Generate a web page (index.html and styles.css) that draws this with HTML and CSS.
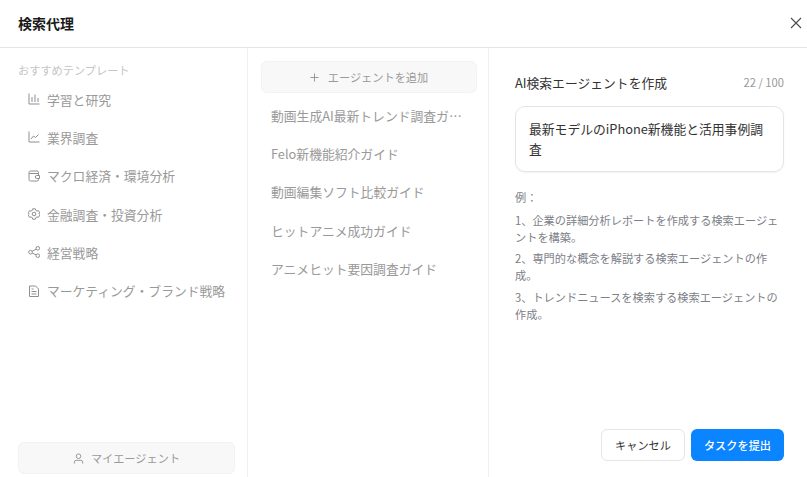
FILE: index.html
```html
<!DOCTYPE html>
<html lang="ja">
<head>
<meta charset="utf-8">
<title>検索代理</title>
<link rel="stylesheet" href="styles.css">
</head>
<body>
<div class="dialog">
  <header class="head">
    <h1 class="title">検索代理</h1>
    <button class="close" aria-label="閉じる">
      <svg width="12" height="12" viewBox="0 0 12 12"><path d="M1 1l10 10M11 1L1 11" stroke="#4b4b4b" stroke-width="1.1" fill="none"/></svg>
    </button>
  </header>
  <div class="cols">
    <aside class="left">
      <div class="label">おすすめテンプレート</div>
      <ul class="cats">
        <li class="cat"><svg class="ico" viewBox="0 0 12 12"><path d="M1 .5v10.500h10.500M4 4v5M7 1.500V9M10 5v4"/></svg>学習と研究</li>
        <li class="cat"><svg class="ico" viewBox="0 0 12 12"><path d="M1 .5v10.500h10.500M3 8l2.500-3 2 1.500L10.500 3.500"/></svg>業界調査</li>
        <li class="cat"><svg class="ico" viewBox="0 0 12 12"><path d="M10.500 3.500V2.500A1.500 1.500 0 0 0 9 1H2.500A1.500 1.500 0 0 0 1 2.500v7A1.500 1.500 0 0 0 2.500 11H9a1.500 1.500 0 0 0 1.500-1.500V8.500M1.200 3.500h9.300V5.500M11.500 5.500H8.800a1.500 1.500 0 0 0 0 3h2.700z"/></svg>マクロ経済・環境分析</li>
        <li class="cat"><svg class="ico" viewBox="0 0 12 12"><path d="M4.700.8h2.600l.4 1.500 1.300.8 1.500-.4 1.300 2.200L10.700 6l1.100 1.100-1.300 2.200-1.500-.4-1.300.8-.4 1.500H4.700l-.4-1.500-1.300-.8-1.500.4L.2 7.100 1.300 6 .2 4.900l1.300-2.200 1.500.4 1.300-.8z"/><circle cx="6" cy="6" r="1.800"/></svg>金融調査・投資分析</li>
        <li class="cat"><svg class="ico" viewBox="0 0 12 12"><circle cx="2.500" cy="6.200" r="1.800"/><circle cx="9.800" cy="2.300" r="1.800"/><circle cx="9.800" cy="9.700" r="1.800"/><path d="M4.100 5.300l4.100-2.100M4.100 7.100l4.100 1.800"/></svg>経営戦略</li>
        <li class="cat"><svg class="ico" viewBox="0 0 12 12"><path d="M1.500 1h6l3 3v7.500h-9zM3.500 6.500h5M3.500 9h5M3.500 4h2"/></svg>マーケティング・ブランド戦略</li>
      </ul>
      <button class="soft mine">
        <svg class="ico ico-user" viewBox="0 0 12 12"><circle cx="6" cy="3.500" r="2.500"/><path d="M1.500 11.500V10a2 2 0 0 1 2-2h5a2 2 0 0 1 2 2v1.500"/></svg>マイエージェント
      </button>
    </aside>
    <section class="mid">
      <button class="soft add">
        <svg class="plus" viewBox="0 0 10 10"><path d="M5 .5v9M.5 5h9"/></svg>エージェントを追加
      </button>
      <ul class="agents">
        <li class="agent">動画生成AI最新トレンド調査ガイド</li>
        <li class="agent">Felo新機能紹介ガイド</li>
        <li class="agent">動画編集ソフト比較ガイド</li>
        <li class="agent">ヒットアニメ成功ガイド</li>
        <li class="agent">アニメヒット要因調査ガイド</li>
      </ul>
    </section>
    <section class="right">
      <div class="form-head">
        <span class="form-title">AI検索エージェントを作成</span>
        <span class="count">22 / 100</span>
      </div>
      <div class="input">最新モデルのiPhone新機能と活用事例調査</div>
      <div class="examples">
        <p class="ex-head">例：</p>
        <p>1、企業の詳細分析レポートを作成する検索エージェントを構築。</p>
        <p>2、専門的な概念を解説する検索エージェントの作成。</p>
        <p>3、トレンドニュースを検索する検索エージェントの作成。</p>
      </div>
      <div class="actions">
        <button class="btn cancel">キャンセル</button>
        <button class="btn submit">タスクを提出</button>
      </div>
    </section>
  </div>
</div>
</body>
</html>
```
FILE: styles.css
```css
* { box-sizing: border-box; }
html, body { margin: 0; height: 100%; }
body {
  font-family: "Noto Sans CJK JP", "Noto Sans", sans-serif;
  background: #fff;
  color: #222;
  overflow: hidden;
}
ul { list-style: none; margin: 0; padding: 0; }
p { margin: 0; }
button { font-family: inherit; cursor: pointer; }
.dialog { width: 807px; height: 477px; display: flex; flex-direction: column; }
.head {
  height: 48px;
  flex: none;
  display: flex;
  align-items: center;
  justify-content: space-between;
  padding: 0 0 1px 18px;
  border-bottom: 1px solid #e6e6e6;
}
.title { margin: 0; font-size: 14px; font-weight: 700; color: #1a1a1a; }
.close {
  border: 0;
  background: none;
  padding: 0;
  width: 12px;
  height: 12px;
  margin: 0 5px 0 0;
  display: flex;
}
.cols { flex: 1; display: flex; min-height: 0; }
.left {
  width: 248px;
  flex: none;
  display: flex;
  flex-direction: column;
  padding: 14px 13px 3px 18px;
  border-right: 1px solid #f0f0f0;
}
.label { font-size: 11.2px; line-height: 16px; color: #c4c4c4; }
.cats { margin-top: 2px; flex: 1; }
.cat {
  height: 38.3px;
  display: flex;
  align-items: center;
  gap: 7px;
  padding-left: 10px;
  font-size: 12.8px;
  color: #999;
}
.ico {
  width: 12px;
  height: 12px;
  flex: none;
  fill: none;
  stroke: #8f8f8f;
  stroke-width: 1;
}
.ico-user { width: 11px; height: 11px; }
.soft {
  display: flex;
  align-items: center;
  justify-content: center;
  background: #f8f8f8;
  border: 1px solid #f2f2f2;
  border-radius: 6px;
  font-size: 11.2px;
  color: #9a9a9a;
}
.mine { height: 32px; width: 217px; gap: 7px; flex: none; }
.mid {
  width: 241px;
  flex: none;
  padding: 13px 12px 0 13px;
  border-right: 1px solid #f0f0f0;
}
.add { width: 216px; height: 32px; gap: 9px; }
.plus { width: 9px; height: 9px; fill: none; stroke: #8f8f8f; stroke-width: 1; }
.agents { margin-top: 4px; }
.agent {
  height: 38.2px;
  line-height: 38px;
  padding: 0 10px;
  font-size: 12.8px;
  color: #999;
  white-space: nowrap;
  overflow: hidden;
  text-overflow: ellipsis;
}
.right {
  flex: 1;
  min-width: 0;
  display: flex;
  flex-direction: column;
  padding: 24px 23px 16px 26px;
}
.form-head { display: flex; justify-content: space-between; align-items: center; height: 20px; }
.form-title { font-size: 12.8px; color: #333; }
.count { font-size: 11.2px; color: #999; }
.input {
  margin-top: 14px;
  height: 66px;
  padding: 12px 13px;
  border: 1px solid #e4e4e8;
  border-radius: 10px;
  box-shadow: 0 1px 2px rgba(0,0,0,.05);
  font-size: 12.8px;
  line-height: 20px;
  color: #333;
}
.examples { margin-top: 17px; flex: 1; font-size: 11.2px; line-height: 16.8px; color: #7c8087; }
.examples p { margin-bottom: 5px; }
.examples .ex-head { margin-bottom: 6px; }
.actions { display: flex; justify-content: flex-end; gap: 6px; }
.btn { height: 32px; border-radius: 6px; font-size: 11.2px; padding: 0; }
.cancel { width: 84px; background: #fff; border: 1px solid #e6e6e6; color: #333; }
.submit { width: 93px; background: #0a84ff; border: 0; color: #fff; font-weight: 500; }
```
